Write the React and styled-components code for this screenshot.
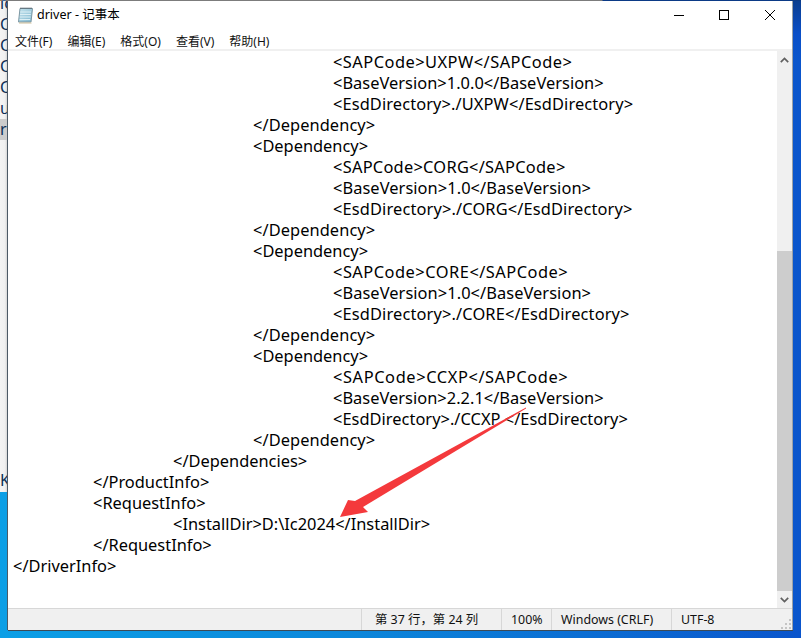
import React from 'react';
import styled, { createGlobalStyle } from 'styled-components';

const GlobalStyle = createGlobalStyle`
	html, body {
		margin: 0;
		padding: 0;
		overflow: hidden;
	}
	body {
		font-family: "Noto Sans", "Noto Sans CJK SC", sans-serif;
	}
`;

const uiFont = `"Noto Sans", "Noto Sans CJK SC", sans-serif`;

// indent level, text, extra letter spacing (the original font has wider capitals)
const xmlLines = [
	[4, '<SAPCode>UXPW</SAPCode>', 0.48],
	[4, '<BaseVersion>1.0.0</BaseVersion>', 0.03],
	[4, '<EsdDirectory>./UXPW</EsdDirectory>', 0.11],
	[3, '</Dependency>', 0.08],
	[3, '<Dependency>', 0],
	[4, '<SAPCode>CORG</SAPCode>', 0.26],
	[4, '<BaseVersion>1.0</BaseVersion>', 0.07],
	[4, '<EsdDirectory>./CORG</EsdDirectory>', 0.14],
	[3, '</Dependency>', 0.08],
	[3, '<Dependency>', 0],
	[4, '<SAPCode>CORE</SAPCode>', 0.5],
	[4, '<BaseVersion>1.0</BaseVersion>', 0.07],
	[4, '<EsdDirectory>./CORE</EsdDirectory>', 0.14],
	[3, '</Dependency>', 0.08],
	[3, '<Dependency>', 0],
	[4, '<SAPCode>CCXP</SAPCode>', 0.6],
	[4, '<BaseVersion>2.2.1</BaseVersion>', 0.03],
	[4, '<EsdDirectory>./CCXP </EsdDirectory>', 0.03],
	[3, '</Dependency>', 0.08],
	[2, '</Dependencies>', 0],
	[1, '</ProductInfo>', 0],
	[1, '<RequestInfo>', 0],
	[2, '<InstallDir>D:\\Ic2024</InstallDir>', 0],
	[1, '</RequestInfo>', 0],
	[0, '</DriverInfo>', 0],
];

const menus = ['文件(F)', '编辑(E)', '格式(O)', '查看(V)', '帮助(H)'];
const behindRows = ['ic', 'C', 'C', 'C', 'C', 'ux', 'ri'];

export default function App() {
	return (
		<Desktop>
			<GlobalStyle />
			<TopEdge />
			<Workspace>
				<BehindWindow>
					{behindRows.map((text, i) => (
						<BehindRow key={i} first={i === 0} selected={i === 6}>{text}</BehindRow>
					))}
					<BehindRow last>K</BehindRow>
				</BehindWindow>
				<Notepad>
					<TitleBar>
						<NotepadIcon />
						<TitleText>driver - 记事本</TitleText>
						<WindowButtons>
							<WindowButton>
								<svg width="10" height="10" viewBox="0 0 10 10"><path d="M0 5.5H10" stroke="#000" fill="none" /></svg>
							</WindowButton>
							<WindowButton>
								<svg width="10" height="10" viewBox="0 0 10 10"><rect x="0.5" y="0.5" width="9" height="9" stroke="#000" fill="none" /></svg>
							</WindowButton>
							<WindowButton close>
								<svg width="10" height="10" viewBox="0 0 10 10"><path d="M0 0L10 10M10 0L0 10" stroke="#000" fill="none" /></svg>
							</WindowButton>
						</WindowButtons>
					</TitleBar>
					<MenuBar>
						{menus.map(m => <MenuItem key={m}>{m}</MenuItem>)}
					</MenuBar>
					<Editor>
						<TextArea>
							{xmlLines.map(([level, text, spacing], i) => (
								<Line key={i} level={level} spacing={spacing}>{text}</Line>
							))}
						</TextArea>
						<ScrollBar>
							<ScrollArrow>
								<svg width="9" height="6" viewBox="0 0 9 6"><path d="M0.8 5.2L4.5 1.5L8.2 5.2" stroke="#606060" strokeWidth="1.7" fill="none" /></svg>
							</ScrollArrow>
							<ScrollTrack>
								<ScrollThumb />
							</ScrollTrack>
							<ScrollArrow>
								<svg width="9" height="6" viewBox="0 0 9 6"><path d="M0.8 0.8L4.5 4.5L8.2 0.8" stroke="#606060" strokeWidth="1.7" fill="none" /></svg>
							</ScrollArrow>
						</ScrollBar>
					</Editor>
					<StatusBar>
						<StatusSpacer />
						<StatusCell width={140} pad={13}>第 37 行，第 24 列</StatusCell>
						<StatusCell width={50} pad={9}>100%</StatusCell>
						<StatusCell width={120} pad={9}>Windows (CRLF)</StatusCell>
						<StatusCell width={121} pad={9}>UTF-8</StatusCell>
						<Grip>
							<svg width="12" height="12" viewBox="0 0 12 12">
								<path d="M9 1h2v2H9zM5 5h2v2H5zM9 5h2v2H9zM1 9h2v2H1zM5 9h2v2H5zM9 9h2v2H9z" fill="#c4c4c4" />
							</svg>
						</Grip>
					</StatusBar>
				</Notepad>
			</Workspace>
			<Arrow width="801" height="638" viewBox="0 0 801 638">
				<polygon points="526,407.5 526,408.5 363,507 368,512 340,517 348,500 355,501" fill="#f4393c" />
			</Arrow>
		</Desktop>
	);
}

function NotepadIcon() {
	return (
		<svg width="17" height="17" viewBox="0 0 17 17">
			<defs>
				<linearGradient id="page" x1="0" y1="0" x2="1" y2="1">
					<stop offset="0" stopColor="#c6e4ee" />
					<stop offset="1" stopColor="#7fb7cf" />
				</linearGradient>
			</defs>
			<path d="M3 1.5H15.5L14 15H1.5Z" fill="url(#page)" stroke="#7c97a3" />
			<path d="M3.2 5H14M3 7.5H13.8M2.8 10H13.5M2.6 12.5H13.2" stroke="#dceff5" fill="none" />
			<path d="M3.5 1.2H15" stroke="#4e5a64" strokeWidth="1.4" strokeDasharray="1 1" fill="none" />
			<path d="M2 16H14.5" stroke="#cdbd97" fill="none" />
		</svg>
	);
}

const Desktop = styled.div`
	position: relative;
	width: 801px;
	height: 638px;
	overflow: hidden;
	display: flex;
	flex-direction: column;
	background:
		linear-gradient(180deg, #0a3d8e 0, #0a4fc8 34px, rgba(10, 80, 210, 0) 60px) right top / 200px 100% no-repeat,
		linear-gradient(90deg, #0c9fe6 0%, #0c86da 45%, #0a55cc 100%);
`;

const TopEdge = styled.div`
	height: 1px;
	flex: none;
	background: linear-gradient(90deg, #c98a3a 0, #2a5fb0 4px, #7c7c7c 6px, #7c7c7c 602px, #0b3a86 603px);
`;

const Workspace = styled.div`
	display: flex;
	align-items: flex-start;
`;

const BehindWindow = styled.div`
	width: 8px;
	height: 491px;
	flex: none;
	display: flex;
	flex-direction: column;
	overflow: hidden;
	background: linear-gradient(90deg, #f4f4f4 0, #f0f0f0 5px, #c8c8c8 8px);
`;

const BehindRow = styled.div`
	height: 21px;
	flex: none;
	font: 16px/21px ${uiFont};
	color: #0d2f55;
	text-align: right;
	white-space: nowrap;
	margin-top: ${props => (props.first ? '-8px' : props.last ? 'auto' : '0')};
	margin-bottom: ${props => (props.last ? '1px' : '0')};
	background: ${props => (props.selected ? '#cccccc' : 'transparent')};
`;

const Notepad = styled.div`
	width: 785px;
	height: 629px;
	flex: none;
	display: flex;
	flex-direction: column;
	background: #fff;
	box-shadow: -1px 0 0 #4d5a66, 0 1px 0 #3c4a56;
	border-right: 1px solid #9aa0a6;
	box-sizing: border-box;
`;

const TitleBar = styled.div`
	height: 28px;
	flex: none;
	display: flex;
	align-items: center;
	padding-left: 9px;
`;

const TitleText = styled.span`
	margin-left: 3px;
	font: 12.5px/20px ${uiFont};
	color: #000;
`;

const WindowButtons = styled.div`
	margin-left: auto;
	display: flex;
	padding-right: 17px;
	gap: 35px;
`;

const WindowButton = styled.div`
	width: 10px;
	height: 10px;
	display: flex;
	margin-left: ${props => (props.close ? '1px' : '0')};
`;

const MenuBar = styled.div`
	height: 20px;
	flex: none;
	display: flex;
	align-items: flex-start;
	gap: 15px;
	padding-left: 7px;
`;

const MenuItem = styled.span`
	font: 12px/26px ${uiFont};
	color: #111;
`;

const Editor = styled.div`
	flex: 1;
	min-height: 0;
	display: flex;
	border-top: 2px solid #f0f0f0;
`;

const TextArea = styled.div`
	flex: 1;
	min-width: 0;
	overflow: hidden;
	background: #fff;
`;

const Line = styled.div`
	height: 21px;
	padding-left: ${props => 5 + props.level * 80}px;
	font: 16.4px/21px ${uiFont};
	letter-spacing: ${props => props.spacing}px;
	color: #000;
	white-space: pre;
`;

const ScrollBar = styled.div`
	width: 15px;
	flex: none;
	display: flex;
	flex-direction: column;
	background: #f0f0f0;
`;

const ScrollArrow = styled.div`
	height: 17px;
	flex: none;
	display: flex;
	align-items: center;
	justify-content: center;
`;

const ScrollTrack = styled.div`
	flex: 1;
	display: flex;
	flex-direction: column;
	justify-content: flex-end;
`;

const ScrollThumb = styled.div`
	height: 340px;
	background: #cdcdcd;
`;

const StatusBar = styled.div`
	position: relative;
	height: 22px;
	flex: none;
	display: flex;
	background: #f0f0f0;
	border-top: 1px solid #d7d7d7;
	box-sizing: border-box;
`;

const StatusSpacer = styled.div`
	flex: 1;
`;

const StatusCell = styled.div`
	width: ${props => props.width}px;
	flex: none;
	box-sizing: border-box;
	padding-left: ${props => props.pad}px;
	border-left: 1px solid #d7d7d7;
	font: 12.4px/21px ${uiFont};
	color: #111;
	white-space: nowrap;
`;

const Grip = styled.div`
	position: absolute;
	right: 0;
	bottom: 0;
	width: 12px;
	height: 12px;
	display: flex;
`;

const Arrow = styled.svg`
	position: absolute;
	left: 0;
	top: 0;
	pointer-events: none;
`;
